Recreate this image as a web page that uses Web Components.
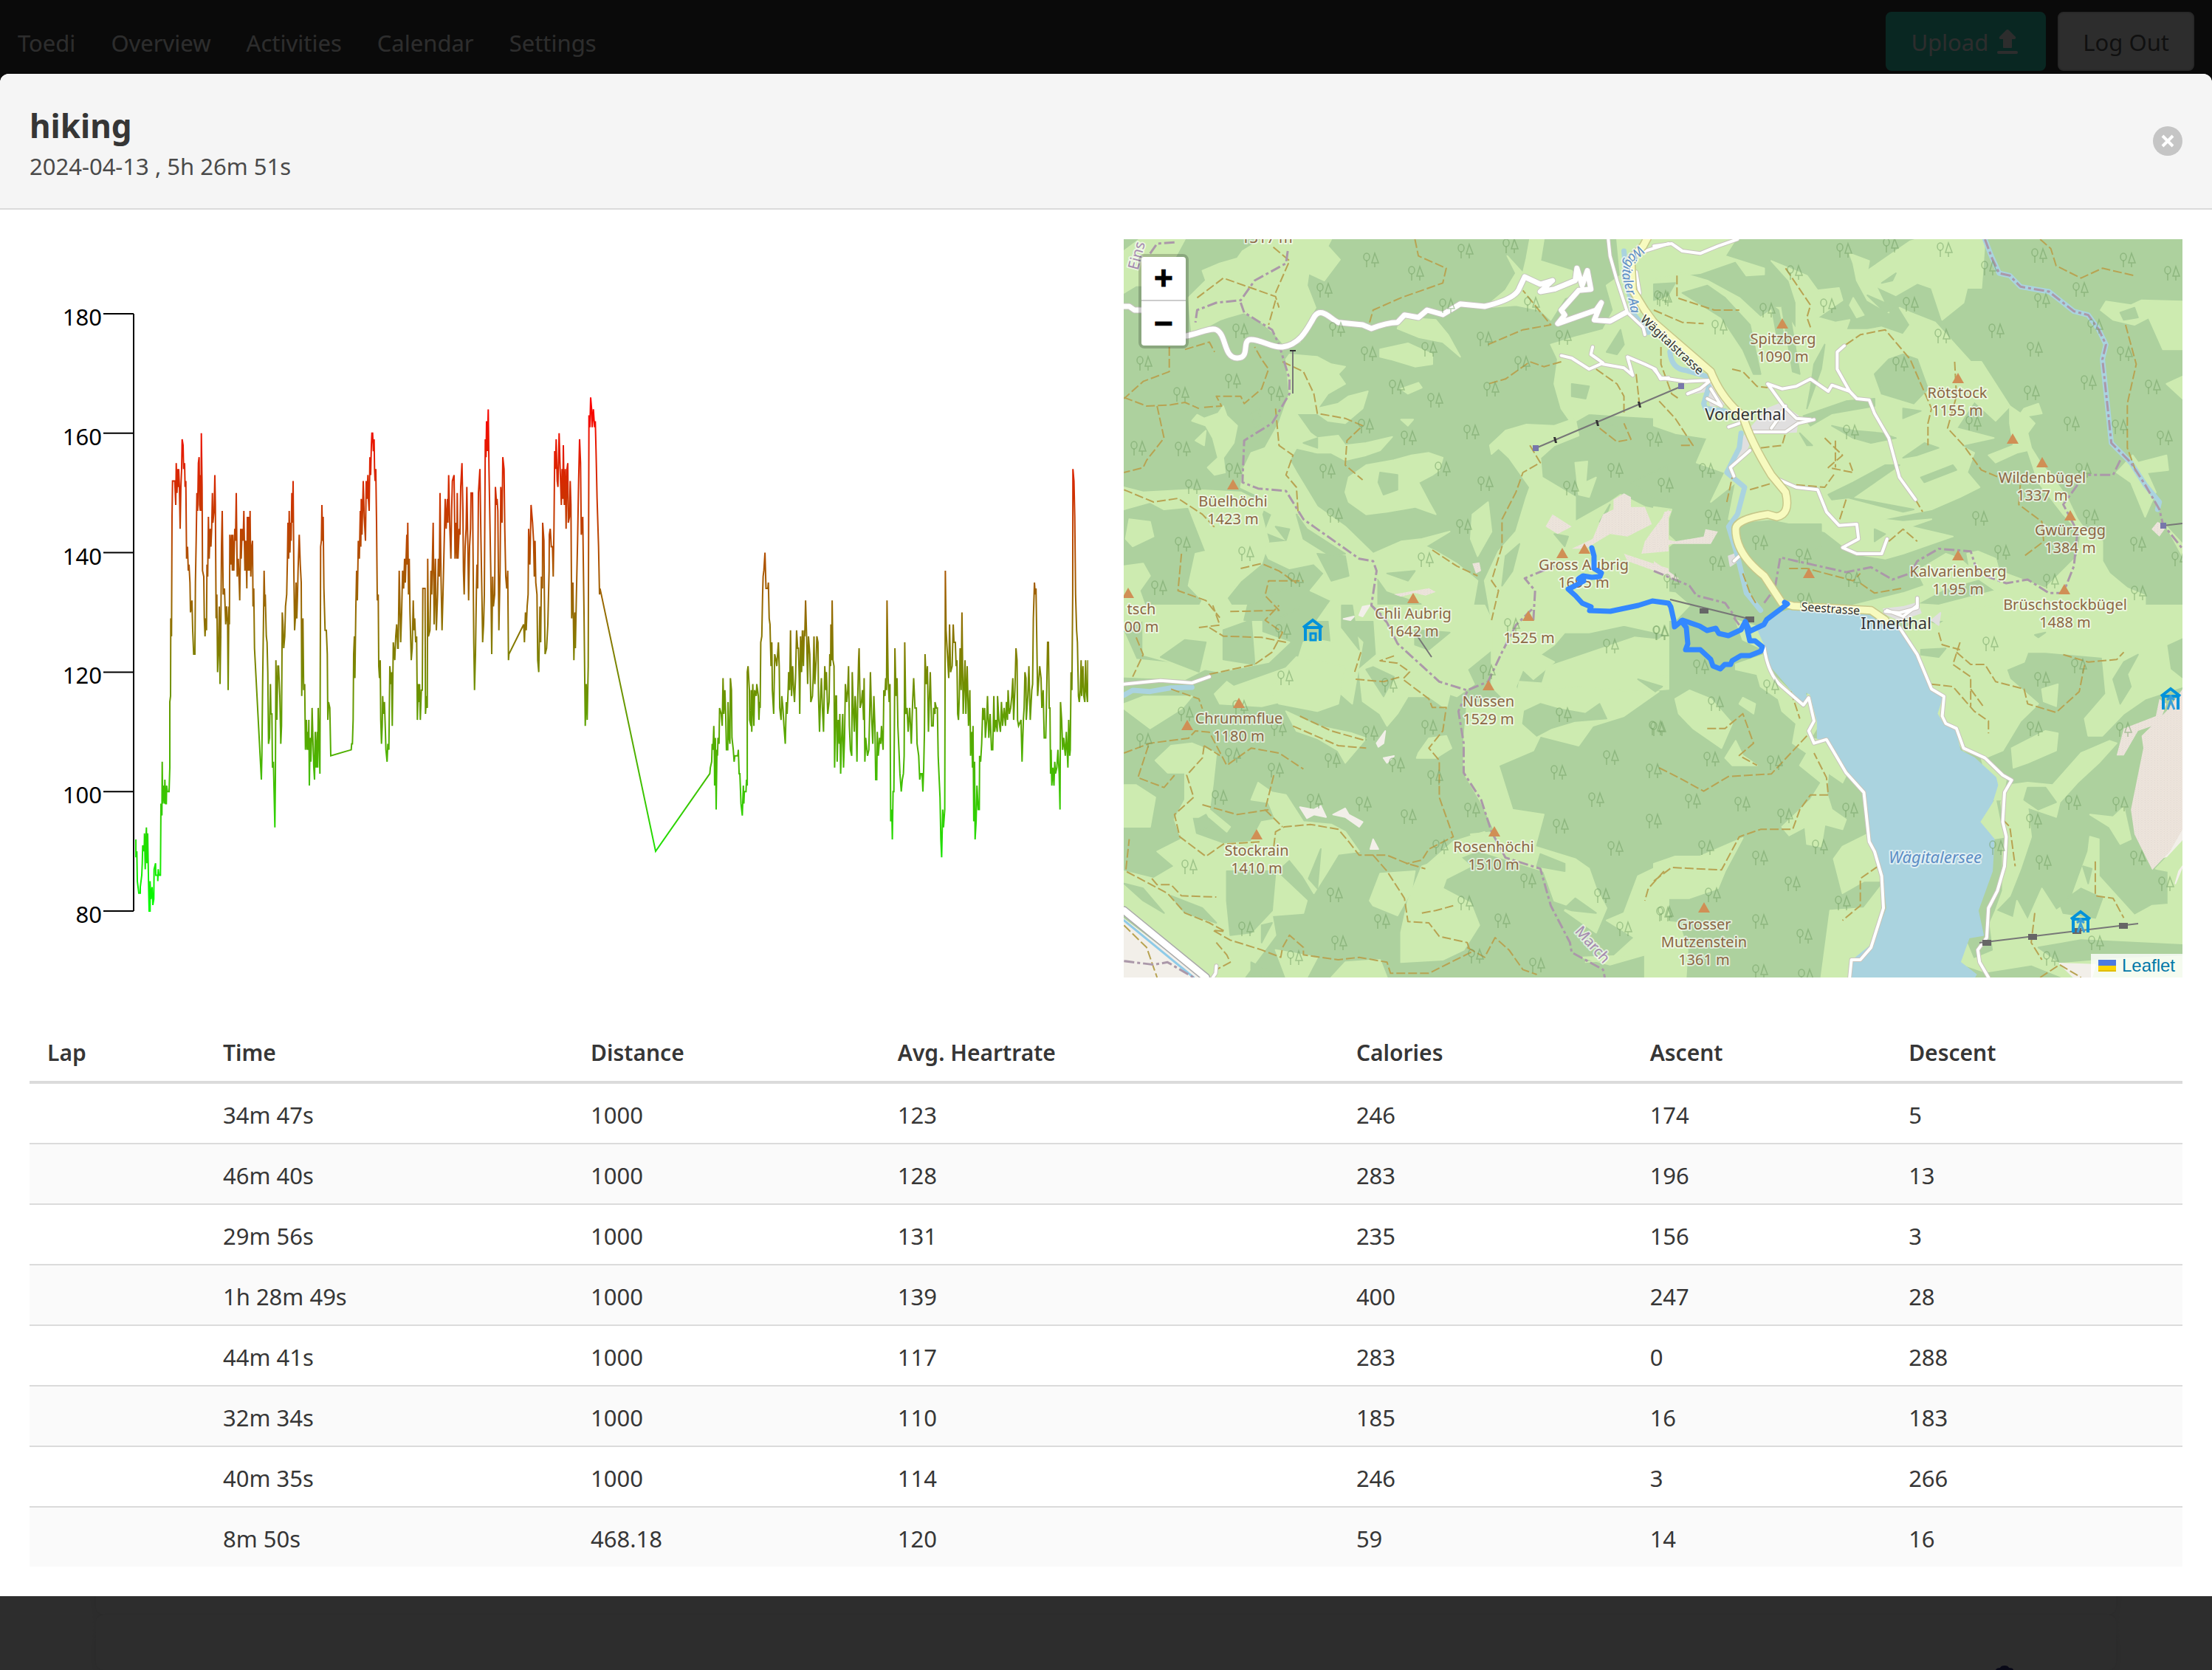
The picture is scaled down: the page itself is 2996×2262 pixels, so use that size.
<!DOCTYPE html>
<html lang="en">
<head>
<meta charset="utf-8">
<meta name="viewport" content="width=device-width, initial-scale=1">
<title>Toedi</title>
<style>
  html, body { margin: 0; }
  body { font: 31px/48px "Noto Sans", sans-serif; color: #363636; background: #fff; }
</style>
</head>
<body>
<toedi-app>
  <toedi-navbar slot="page"></toedi-navbar>
  <toedi-feed slot="page"></toedi-feed>
  <activity-modal slot="modal">
    <span slot="title">hiking</span>
    <span slot="subtitle">2024-04-13 , 5h 26m 51s</span>
    <heart-rate-chart slot="media"></heart-rate-chart>
    <route-map slot="media"></route-map>
    <lap-table slot="details"></lap-table>
  </activity-modal>
</toedi-app>

<script>
const define = (name, html, setup) => customElements.define(name, class extends HTMLElement {
  constructor() {
    super();
    this.attachShadow({ mode: 'open' }).innerHTML = html;
    if (setup) setup(this.shadowRoot);
  }
});

/* Application shell: the page and the modal share one grid cell */
define('toedi-app', `
<style>
  :host { display: grid; min-height: 100vh; }
  .page, .overlay { grid-area: 1 / 1; min-width: 0; }
  .page { display: flex; flex-direction: column; overflow: hidden; height: 100%; max-height: 100vh; }
  .overlay { position: relative; background: rgba(10,10,10,.86); padding: 100px 0; }
</style>
<div class="page"><slot name="page"></slot></div>
<div class="overlay"><slot name="modal"></slot></div>`);

define('toedi-navbar', `
<style>
  :host { display: block; background: #0a0a0a; }
  nav { display: flex; align-items: center; justify-content: space-between; min-height: 112px; padding-right: 24px; }
  .links, .buttons { display: flex; align-items: center; }
  .buttons { gap: 16px; }
  a { color: #fff; text-decoration: none; padding: 18px 24px 14px; }
  button { font: inherit; height: 80px; padding: 2px 32px 0; border: 2px solid #dbdbdb; border-radius: 8px; background: #fff; color: #363636; display: flex; align-items: center; }
  button.primary { background: #00d1b2; border-color: #00d1b2; color: #fff; gap: 8px; }
  svg { width: 36px; height: 36px; }
</style>
<nav aria-label="main navigation">
  <div class="links">
    <a href="#home">Toedi</a><a href="#overview">Overview</a><a href="#activities">Activities</a><a href="#calendar">Calendar</a><a href="#settings">Settings</a>
  </div>
  <div class="buttons">
    <button class="primary" type="button">Upload
      <svg viewBox="0 0 36 36" fill="currentColor" aria-hidden="true"><path d="M18 1q1 0 2 1l9 9q1 3-2 3h-3v11q0 1-1 1H13q-1 0-1-1V14H9q-3 0-2-3l9-9q1-1 2-1z"/><rect x="4" y="30" width="28" height="4" rx="2"/></svg>
    </button>
    <button type="button">Log Out</button>
  </div>
</nav>`);

define('toedi-feed', `
<style>
  :host { display: flex; flex-direction: column; flex: 1; padding: 0 130px; min-height: 0; }
  .card { background: #fff; border-radius: 12px; box-shadow: 0 16px 32px -4px rgba(10,10,10,.1), 0 0 0 2px rgba(10,10,10,.02); }
  .first { flex: 1; }
  .second { height: 75px; display: flex; align-items: flex-end; justify-content: flex-end; }
  svg { width: 40px; height: 6px; margin-right: 130px; }
</style>
<div class="card first"></div>
<div class="card second"><svg viewBox="0 0 40 6" aria-hidden="true"><path d="M7 6q1-3 6-3 1-3 6-3t6 3q6 0 6 3z" fill="#006"/></svg></div>`);

define('activity-modal', `
<style>
  :host { display: block; }
  section { border-radius: 12px 12px 0 0; overflow: hidden; background: #fff; }
  header { display: flex; align-items: center; justify-content: space-between; background: #f5f5f5; border-bottom: 2px solid #dbdbdb; padding: 40px; height: 102px; }
  .heading { display: grid; padding-top: 8px; }
  h1 { margin: 0; font-size: 44px; line-height: 60px; font-weight: 700; color: #363636; }
  p { margin: 0; line-height: 50px; color: #4a4a4a; }
  button { width: 40px; height: 40px; padding: 0; border: 0; border-radius: 50%; background: #c5c5c5; display: grid; place-items: center; }
  button svg { width: 20px; height: 20px; }
  .body { padding: 40px; display: grid; gap: 60px; }
  .columns { display: grid; grid-template-columns: minmax(0, 1fr) minmax(0, 1fr); gap: 48px; }
</style>
<section role="dialog" aria-modal="true" aria-labelledby="t">
  <header>
    <div class="heading"><h1 id="t"><slot name="title"></slot></h1><p><slot name="subtitle"></slot></p></div>
    <button type="button" aria-label="close"><svg viewBox="0 0 20 20" stroke="#fff" stroke-width="4" aria-hidden="true"><path d="M3 3l14 14M17 3L3 17"/></svg></button>
  </header>
  <div class="body">
    <div class="columns"><slot name="media"></slot></div>
    <slot name="details"></slot>
  </div>
</section>`);

/* Laps */
define('lap-table', `
<style>
  :host { display: block; }
  table { width: 100%; border-collapse: separate; border-spacing: 0; table-layout: fixed; }
  th, td { text-align: left; padding: 18px 24px 14px; border-bottom: 2px solid #dbdbdb; }
  th { font-size: 30px; font-weight: 600; border-bottom-width: 4px; }
  tbody tr:nth-child(even) { background: #fafafa; }
  tbody tr:last-child td { border-bottom: 0; }
</style>
<table><colgroup></colgroup><thead><tr></tr></thead><tbody></tbody></table>`, root => {
  const heads = [['Lap', 8.16], ['Time', 17.08], ['Distance', 14.26], ['Avg. Heartrate', 21.3], ['Calories', 13.64], ['Ascent', 12.02], ['Descent', 13.54]];
  const laps = [
    ['34m 47s', '1000', 123, 246, 174, 5],
    ['46m 40s', '1000', 128, 283, 196, 13],
    ['29m 56s', '1000', 131, 235, 156, 3],
    ['1h 28m 49s', '1000', 139, 400, 247, 28],
    ['44m 41s', '1000', 117, 283, 0, 288],
    ['32m 34s', '1000', 110, 185, 16, 183],
    ['40m 35s', '1000', 114, 246, 3, 266],
    ['8m 50s', '468.18', 120, 59, 14, 16]
  ];
  root.querySelector('colgroup').innerHTML = heads.map(h => `<col style="width:${h[1]}%">`).join('');
  root.querySelector('thead tr').innerHTML = heads.map(h => `<th scope="col">${h[0]}</th>`).join('');
  root.querySelector('tbody').innerHTML = laps.map(r => `<tr><td></td>${r.map(c => `<td>${c}</td>`).join('')}</tr>`).join('');
});

/* Heart rate: three stretches of samples, each with its own origin and scale */
const stretches = [
  { ox: 20, oy: 76, kx: 3, ky: 1.823, pts: `372,1343 372,1388 376,1373 378,1446 384,1477 390,1477 390,1462 396,1430 398,1402 400,1358 406,1373 407,1329 410,1417 412,1358 415,1314 417,1402 420,1329 422,1402 424,1462 426,1520 430,1520 430,1446 433,1490 436,1477 438,1462 441,1507 445,1490 446,1417 452,1402 453,1432 461,1432 461,1447 463,1417 466,1432 472,1432 474,1255 478,1285 479,1152 481,1255 484,1212 488,1255 490,1196 493,1255 496,1255 497,1212 500,1226 507,1226 510,1166 510,1005 513,990 514,798 517,842 519,548 521,460 530,460 534,518 536,414 539,488 543,430 545,474 546,430 549,474 552,577 555,474 558,430 560,355 564,370 566,430 570,414 572,474 575,460 578,650 582,620 585,680 588,665 592,710 594,783 600,753 603,828 607,887 612,887 614,710 617,606 620,490 623,533 626,414 629,399 631,518 634,533 635,445 637,533 638,341 641,474 643,680 648,695 650,798 653,842 656,798 659,828 661,665 664,695 667,548 670,650 674,577 677,621 680,577 683,490 685,562 690,533 693,445 695,518 698,798 701,740 704,931 708,870 711,768 714,960 717,842 720,621 723,533 727,738 732,724 737,812 741,768 745,812 747,975 750,768 752,812 754,592 758,665 761,592 764,680 766,592 770,680 774,577 777,606 780,490 784,695 788,650 792,710 794,753 798,577 800,650 804,577 808,606 811,533 815,680 819,606 823,724 825,548 829,680 831,548 834,680 836,533 839,695 843,620 846,606 848,768 851,724 854,870 882,1196 884,1138 887,960 890,828 893,680 896,768 898,739 902,842 905,857 908,931 911,1108 915,1094 919,960 921,1034 925,1034 927,1166 931,1152 937,1314 939,1196 941,902 945,1048 949,916 952,916 957,990 961,1108 964,1064 967,783 970,812 973,870 977,842 980,768 985,740 988,650 990,563 993,650 995,533 998,635 1001,562 1003,606 1006,490 1008,562 1011,460 1014,680 1017,828 1020,798 1023,710 1026,798 1029,740 1031,680 1036,592 1040,665 1044,710 1046,990 1051,798 1054,975 1058,960 1061,1122 1065,1048 1068,1122 1070,1078 1073,1122 1075,1048 1077,1211 1080,1094 1083,1152 1086,1094 1088,1019 1092,1108 1095,1166 1098,1196 1101,1078 1105,1166 1109,1078 1111,1166 1113,1019 1117,1108 1120,1181 1123,620 1126,606 1128,518 1131,606 1133,548 1136,724 1141,828 1146,828 1150,887 1152,1048 1155,1005 1160,1019 1164,1137 1247,1122 1249,1108 1252,1108 1255,1048 1257,887 1260,842 1262,946 1266,768 1269,680 1272,753 1276,606 1280,650 1284,533 1286,620 1288,504 1291,592 1296,460 1300,548 1305,606 1308,460 1311,504 1315,445 1317,503 1320,533 1323,400 1326,445 1329,370 1331,341 1334,341 1337,385 1340,355 1342,430 1344,460 1347,430 1350,562 1353,753 1357,740 1359,916 1362,945 1365,902 1367,1050 1370,1108 1373,1064 1375,990 1378,1034 1382,1005 1386,1078 1388,1122 1393,1152 1396,1108 1400,1122 1404,916 1409,960 1411,931 1414,1064 1418,857 1424,902 1428,842 1432,812 1436,872` },
  { ox: 460, oy: 176, kx: 3, ky: 2.063, pts: `118,780 122,563 128,764 132,680 136,563 140,613 144,530 147,596 150,530 153,463 155,546 157,430 160,630 163,530 166,680 171,814 175,780 179,646 182,730 185,697 189,764 193,748 196,980 200,880 203,930 205,880 208,980 212,897 216,897 218,613 227,613 229,964 233,913 236,947 238,530 241,748 247,730 251,563 254,630 260,430 264,713 269,530 273,730 278,630 281,530 285,580 288,346 292,580 296,730 300,630 304,513 309,363 313,446 318,363 320,430 323,296 328,446 332,530 335,396 338,312 345,296 347,413 349,530 353,430 356,530 358,346 361,530 366,446 369,463 372,330 377,263 381,396 383,563 386,630 390,497 394,446 397,330 401,497 404,646 408,497 412,446 414,346 420,346 422,513 425,763 428,897 432,797 436,613 438,546 441,613 444,346 450,280 454,463 458,630 461,763 465,713 468,630 472,196 475,246 477,146 480,230 484,112 487,280 490,396 494,563 498,797 502,580 505,663 510,630 513,330 518,380 520,363 523,396 527,730 532,563 535,330 540,430 543,246 548,280 551,446 555,580 559,613 563,563 566,814 568,797 628,714 631,763 635,680 638,730 642,664 646,630 648,446 653,546 658,380 664,430 668,480 671,580 674,480 677,596 682,630 685,814 689,847 694,664 697,763 700,580 704,613 705,430 710,480 712,630 715,797 721,780 726,714 731,563 732,463 736,446 740,497 745,497 748,580 751,446 754,230 757,280 760,196 764,313 767,330 772,178 776,280 781,380 784,280 787,363 789,212 793,380 797,280 800,446 804,280 807,263 809,430 814,413 817,312 820,380 823,697 828,596 832,814 836,680 838,780 842,630 847,480 851,312 855,196 859,263 862,463 868,413 870,530 873,680 878,998 882,880 886,980 890,830 893,130 897,163 900,78 904,112 906,162 911,112 916,162 919,146 922,230 926,363 929,430 932,497 936,630 938,613 1164,1348` },
  { ox: 900, oy: 376, kx: 2.8, ky: 3, pts: `60,1043 62,1018 67,994 69,921 72,946 75,849 77,946 78,1091 81,897 84,1191 87,946 89,970 91,897 95,921 97,776 103,800 107,849 110,655 113,800 117,704 120,800 123,946 128,946 129,752 133,897 136,921 138,655 142,704 144,897 149,946 152,997 155,970 166,970 168,946 171,1043 174,1043 178,1164 183,1215 187,1091 189,1164 191,1116 197,1116 199,1068 202,1091 202,630 205,606 210,704 211,825 216,849 217,704 219,873 223,680 227,849 230,704 236,728 238,680 241,704 244,728 246,825 249,752 251,776 253,510 257,485 260,315 262,243 265,218 269,145 271,218 273,291 280,291 282,267 285,413 288,437 292,606 295,510 297,704 302,800 306,558 311,582 314,606 317,558 320,510 323,606 325,776 330,825 333,728 337,776 341,849 346,922 350,752 353,800 357,704 359,630 363,704 366,461 370,728 374,606 378,704 381,752 385,655 389,461 393,534 396,534 399,655 401,800 404,485 408,630 411,461 415,606 418,461 420,485 423,340 427,485 431,680 434,485 439,558 443,752 449,728 452,655 455,485 458,680 463,582 466,485 470,510 472,728 476,873 480,728 483,655 487,776 491,873 496,606 500,704 502,630 507,800 512,752 515,558 518,606 519,437 522,582 524,340 527,582 531,606 533,1020 538,728 540,728 543,997 547,825 551,922 553,800 556,1043 560,897 564,800 567,1020 571,897 574,680 579,752 583,704 586,606 589,849 593,946 598,970 600,630 604,776 608,873 611,728 614,776 618,997 621,728 624,582 626,534 630,776 635,752 639,704 643,825 645,655 648,997 651,897 658,970 663,946 666,800 669,630 673,800 678,922 682,728 686,849 689,1068 693,1068 695,873 699,970 704,897 708,922 711,849 717,946 720,704 724,728 727,655 730,704 732,340 736,655 740,752 743,680 746,1240 750,1190 752,1312 755,1116 758,1116 760,849 762,534 766,728 770,655 773,849 778,970 781,1043 786,1116 790,1068 794,1043 797,970 799,510 803,800 808,776 812,873 818,776 824,922 829,752 833,655 838,776 843,776 846,922 852,970 856,1068 860,1043 865,1043 868,1116 871,1018 874,873 876,558 881,680 885,606 889,873 893,728 896,630 901,849 907,849 909,776 914,800 914,752 919,776 923,776 926,970 930,1068 933,1140 936,1312 939,1386 943,1190 946,1264 951,1190 953,218 956,461 961,558 966,655 969,437 973,630 979,606 983,437 986,510 991,510 994,606 997,582 1000,800 1003,825 1006,728 1009,534 1013,704 1016,388 1021,800 1028,582 1031,800 1036,606 1041,849 1046,704 1049,970 1054,873 1056,1020 1058,849 1061,1240 1064,997 1066,1312 1070,1240 1073,1091 1078,1190 1082,1190 1083,970 1087,997 1091,922 1095,776 1099,825 1102,776 1105,897 1110,825 1113,728 1118,897 1123,800 1128,946 1133,946 1137,728 1140,873 1145,825 1150,873 1151,728 1156,825 1162,873 1166,752 1170,849 1176,776 1181,849 1185,752 1189,825 1191,704 1196,800 1201,776 1205,728 1209,655 1212,825 1217,704 1221,534 1225,582 1227,825 1231,849 1240,825 1244,997 1249,825 1252,776 1255,630 1259,655 1260,825 1266,728 1270,606 1275,825 1281,704 1284,680 1287,413 1291,267 1294,315 1297,291 1300,510 1303,728 1308,655 1311,606 1316,655 1319,776 1324,704 1328,897 1334,897 1336,800 1341,510 1344,510 1347,776 1350,776 1352,1043 1354,946 1357,1091 1361,1018 1365,1091 1368,997 1371,1043 1376,1018 1380,946 1385,1043 1388,1190 1390,752 1394,825 1398,946 1402,897 1408,970 1412,873 1418,1020 1421,825 1425,970 1427,946 1430,630 1433,704 1436,315 1437,-195 1441,-146 1444,0 1447,315 1451,461 1454,510 1458,728 1461,752 1465,704 1468,582 1470,728 1475,606 1478,728 1482,752 1485,582 1488,704 1492,752 1494,582` }
];

define('heart-rate-chart', `
<style>
  :host { display: block; }
  svg { display: block; width: 100%; height: auto; }
  text { font-size: 31px; fill: #000; text-anchor: end; }
</style>
<svg viewBox="0 0 1434 1000" role="img" aria-label="Heart rate">
  <defs><linearGradient id="bpm" gradientUnits="userSpaceOnUse" x1="0" y1="214" x2="0" y2="910"><stop stop-color="#f00"/><stop offset="1" stop-color="#0f0"/></linearGradient></defs>
  <g class="axis" stroke="#000" stroke-width="2" fill="none"></g><g class="labels"></g>
  <polyline fill="none" stroke="url(#bpm)" stroke-width="2"/>
</svg>`, root => {
  const top = 101, bottom = 910, y = v => bottom - (v - 80) * (bottom - top) / 100;
  const ticks = [80, 100, 120, 140, 160, 180];
  root.querySelector('.axis').innerHTML = `<path d="M141 ${top}V${bottom}${ticks.map(t => `M100 ${y(t)}H141`).join('')}"/>`;
  root.querySelector('.labels').innerHTML = ticks.map(t => `<text x="98" y="${y(t) + 16}">${t}</text>`).join('');
  root.querySelector('polyline').setAttribute('points', stretches.flatMap(s => s.pts.split(' ').map(p => {
    const [px, py] = p.split(',').map(Number);
    const bpm = Math.round(80 + (bottom - (s.oy + py / s.ky)) / 8.09);
    return (s.ox + px / s.kx).toFixed(1) + ',' + y(bpm).toFixed(1);
  })).join(' '));
});

/* Map: four survey sheets (NW, NE, SW, SE) placed on one canvas */
const sheets = [
  { x: -2, y: -4, kx: .4719, ky: 1 / 3,
    grass: ['5,60 50,12 180,12 150,90 110,200 40,200 5,230','345,60 400,12 600,12 590,40 625,95 580,180 535,150 530,200 555,290 530,350 510,430 470,450 440,400 400,350 350,310 300,330 280,340 200,400 190,250 240,180 230,140 280,110 330,90','480,480 560,490 600,520 640,530 620,560 640,600 590,640 560,700 620,680 650,650 705,630 690,700 640,760 590,750 560,720 500,720 540,800 560,820 620,810 640,850 700,840 775,815 740,870 700,890 640,910 600,880 560,880 500,860 480,910 500,960 560,1100 640,1180 720,1290 800,1240 860,1230 940,1200 870,1260 900,1280 960,1330 1020,1400 1000,1560 880,1560 860,1490 760,1440 730,1380 730,1560 560,1560 600,1480 540,1440 580,1370 550,1330 480,1350 420,1310 400,1250 480,1240 410,1200 430,1130 380,1090 400,1060 340,1020 350,940 370,880 410,860 450,760 480,640 470,500','200,750 215,725 235,740 275,720 290,690 300,730 330,770 320,840 290,900 295,960 265,970 245,940 275,900 260,820 240,770','210,830 240,790 235,850','5,1020 60,1040 200,1030 340,1040 410,1090 400,1130 420,1240 400,1330 340,1400 300,1470 340,1560 200,1560 230,1480 190,1420 210,1290 240,1280 190,1100 120,1110 80,1080 5,1110','20,1150 80,1160 90,1220 30,1260 10,1230','5,1340 60,1330 80,1380 50,1440 80,1560 5,1560','740,460 820,435 890,480 890,520 840,530 770,500 740,490','800,620 850,595 860,615 820,640','800,330 900,340 935,400 970,490 920,430 850,410 790,375','640,1040 650,980 700,930 780,910 830,890 880,880 920,900 910,950 890,970 850,1000 880,1080 900,1130 840,1100 760,1120 700,1130 650,1080','1105,80 1150,150 1160,90 1170,12 1210,12 1200,100 1290,140 1330,220 1270,250 1230,340 1200,300 1130,280 1040,290 1100,220 1130,150','1420,12 1568,12 1568,740 1440,730 1340,720 1290,760 1260,700 1240,600 1250,500 1230,440 1300,410 1380,380 1410,300 1390,200 1430,160','1055,850 1100,790 1160,765 1240,770 1300,740 1310,810 1240,850 1200,900 1205,980 1300,1060 1300,1160 1400,1080 1430,1050 1500,1100 1568,1120 1568,1560 1060,1560 1040,1400 1080,1280 1130,1200 1160,1060 1170,1020 1110,900 1080,860 1060,885','1300,920 1335,915 1330,1000 1360,980 1340,1060 1310,1050','1005,1130 1050,1080 1060,1200 1020,1300 1000,1230','800,745 835,745 820,770'],
    woods: ['740,960 790,970 790,1030 750,1050 735,1000','440,1180 480,1190 470,1235','500,1130 530,1190 640,1290 600,1300 520,1230','560,1290 640,1300 650,1380 600,1400','1400,1090 1390,1130 1370,1160','1290,600 1340,610 1330,660 1290,650','1350,750 1420,770 1400,800 1350,790','1440,440 1420,480 1390,470 1430,380','1460,1000 1568,930 1568,1080 1520,1060','370,720 390,700 400,760 380,780','560,820 520,840 560,860','1100,1300 1140,1250 1120,1360 1090,1420','1240,1210 1280,1220 1270,1260','760,1370 840,1360 820,1400','360,1500 470,1430 520,1500 440,1560 350,1560'],
    rock: ['1290,1270 1350,1230 1380,1130 1410,1110 1410,1070 1440,1045 1460,1060 1460,1100 1500,1100 1520,1170 1450,1220 1400,1210 1330,1270','1215,1180 1235,1130 1290,1180 1250,1210','1490,1290 1500,1240 1520,1200 1568,1110 1568,1280','1440,1290 1568,1350 1568,1380 1450,1320','780,1455 840,1440 880,1430 900,1445 870,1460 840,1450 800,1465','1005,1330 1025,1325 1030,1360 1015,1370'],
    white: ['M185,405 C230,390 255,370 270,380 C300,400 290,495 330,495 C370,495 340,420 370,420 C400,420 430,455 460,450 C510,440 530,380 550,330 C570,280 600,340 620,350 L690,360 715,375 Q760,350 790,350 L810,320 850,330 875,300 920,318 970,275 1040,285 Q1130,255 1140,210 L1155,165 1200,195 1235,180 1200,225 1240,215 1300,180 1305,130 1320,200 1335,140 1345,215 1310,220 1260,300 1270,320 1250,355 1360,300 1375,270 1355,340 1400,345 1445,310','M0,285 20,285 35,300 60,300'],
    lane: ['M1395,12 1400,80 1420,180 1450,310 1495,370 1500,400','M1260,485 1290,495 1340,540 1380,515 1345,480 1350,450','M1380,520 1440,535 1465,565 1450,490 1500,520 1530,540 1545,580 1568,575','M1475,145 1485,230 1475,290','M1490,65 1568,30'],
    path: ['M215,250 290,170 330,190 440,245 450,290','M440,260 420,360','M440,230 480,100 430,40','M135,450 135,550 60,590 5,660','M5,655 70,690 140,685 180,675 220,700','M235,695 285,690 270,650 340,650 350,680 400,620 420,540 400,500 380,450','M460,510 520,550 550,640 560,720 640,740 690,770 645,830 640,930 690,990','M100,690 120,820 70,910 60,940 5,960','M440,700 450,850 490,890 470,970 500,1020 505,1130','M840,12 850,80 930,130 920,190 800,250 720,300 710,350','M1260,510 1210,530 1170,510 1100,580 1050,600','M1170,850 1200,920 1150,960 1130,1040 1090,1150 1090,1260 1060,1400 1080,1440 1060,1560','M5,1030 90,1080 160,1065 230,1130 270,1190','M170,1290 160,1440 240,1480 280,1550','M310,1525 450,1520 410,1460 420,1400 520,1400','M340,1350 400,1330 450,1360 500,1410','M1360,540 1420,600 1440,650 1440,720','M1475,560 1485,690','M1050,440 1150,380 1230,360 1150,220','M180,460 250,430 265,470','M1370,780 1420,835 1460,825 1440,760','M890,1275 960,1340 1020,1380'],
    border: ['M475,60 470,110 380,180 340,260 270,270 215,300 210,350','M340,270 350,310 430,380 450,440 480,580 480,640 430,760 350,830 345,1000 390,1025 470,1035 520,1150 680,1310 720,1320 730,1360 715,1500 760,1560','M80,70 100,30 150,25','M1180,1560 1185,1440 1155,1390 1240,1340'],
    tree: '715,95 985,60 843,150 580,218 1115,40 339,383 318,587 170,643 441,640 788,612 898,665 1060,620 700,770 822,820 1003,795 707,478 63,516 174,865 47,860 203,1018 321,950 174,1250 106,1428 590,955 920,945 1042,1005 1415,950 1288,1022 1148,515 1177,275 1267,410 1527,825 982,1180 1040,417 617,378 356,1290 610,1135 872,1315 497,1395 932,283 882,460 1550,250' },
  { x: 718, y: -4, kx: .4822, ky: 1 / 3,
    grass: ['0,12 230,12 200,80 310,130 310,155 260,160 230,100 130,150 0,170','0,180 80,150 150,180 240,250 300,330 340,290 360,290 400,380 400,270 380,180 330,100 430,160 460,220 520,210 530,260 460,330 510,350 550,340 540,380 600,380 640,370 700,400 720,360 690,290 720,310 790,350 890,510 920,510 1000,690 960,750 900,670 850,780 955,820 860,850 900,880 880,960 915,1020 860,1060 780,1110 640,1150 700,1160 780,1150 720,1180 840,1220 700,1290 650,1310 560,1290 480,1200 400,1170 330,1150 250,1160 210,1150 230,1000 160,1080 200,960 120,920 150,820 60,800 0,770','600,140 720,20 740,12 930,12 920,210 880,210 870,270 810,340 780,210 740,190 680,240 620,200','550,70 605,100 600,140 630,220 660,310 600,260 570,180 560,110','560,250 590,320 570,330 550,280','1255,300 1270,265 1340,280 1370,260 1485,265 1485,460 1430,460 1390,330 1350,360 1290,340','1040,700 1080,680 1090,720 1050,730 1070,760 1050,800 1060,860 1090,930 1110,960 1160,1060 1190,1150 1230,1230 1260,1240 1260,1320 1280,1370 1330,1430 1380,1460 1380,1560 640,1560 700,1490 800,1500 960,1440 890,1370 880,1290 910,1280 960,1310 970,1360 1100,1430 1190,1300 1200,1210 1150,1130 1080,1000 1050,870 1020,880 960,920 940,890 1010,850 1000,760 1000,690 1030,720','1300,960 1345,890 1360,920 1440,890 1445,950 1385,960 1410,1040 1380,1140 1340,1000','820,1290 860,1310 920,1390 820,1430 730,1500 640,1530 560,1500 700,1450 760,1420 740,1360','1440,600 1485,570 1485,660','0,1100 50,1110 30,1200 60,1240 0,1310','1440,1180 1485,1250 1485,1300','0,1440 60,1450 100,1500 60,1560 0,1560'],
    woods: ['620,560 660,500 700,480 740,500 770,620 730,680 640,640','420,730 540,670 620,660 620,690 500,720 440,770','490,1050 560,1000 650,930 690,930 560,1060 500,1070','750,980 840,930 850,950 760,1000','150,200 200,250 270,360 300,560 280,560 250,460 190,330 80,230','360,290 380,300 410,560 390,550','330,280 350,300 370,440 350,440','0,195 60,190 40,240 0,260','500,770 560,790 640,800 680,820 610,840 560,820','700,900 760,840 800,860 740,890','430,700 440,620 450,520 480,440 470,540','700,700 750,710 700,740','410,800 445,850 430,850','600,240 680,290 650,310','640,190 680,150 670,180','1310,310 1350,290 1360,330 1320,340','250,1170 470,1170 470,1260 300,1400 250,1280','540,1060 620,1080 730,1110 700,1120','620,1190 650,1210 620,1240'],
    rock: ['0,1220 60,1240 140,1220 145,1190 180,1200 160,1250 50,1250 0,1275','0,1240 30,1120 50,1115 20,1210','0,1320 70,1390 60,1400 0,1350','1398,1190 1415,1160 1440,1180 1420,1220'],
    town: ['265,790 320,700 355,680 405,730 400,795 280,800 260,870 215,950 250,820','100,640 160,590 200,680 160,690 150,630','645,1530 740,1490 750,1530 690,1560','210,1300 230,1290 235,1320 215,1340'],
    water: ['M45,470 Q50,540 90,545 L150,570','M155,610 140,680 145,700 200,710','M245,800 240,860 205,960 255,1020 235,1130 210,1180 235,1300 260,1450 300,1520','M930,12 945,70 970,150 1000,160 1030,205 1110,225 1180,305 1220,320 1250,380 1270,440 1260,500 1275,700 1285,840 1340,920 1380,1010 1420,1080 1415,1110'],
    lane: ['M0,40 50,30 80,60 130,70 180,40 235,12','M0,540 20,575 90,590 160,585 130,620 95,640','M150,660 190,690 160,620','M320,600 365,690 400,740 440,745','M210,775 240,760 M370,690 350,740 330,780','M320,600 360,620 400,610 440,580 490,630 500,605 550,630 515,540 515,470 535,445','M550,630 570,660 605,665 620,720 660,820 690,980 735,1070','M345,985 400,1020 460,1030 485,1120 520,1175 570,1170 575,1230 530,1265 570,1290 640,1290 655,1230','M270,870 215,940 225,975','M280,795 370,795 405,760 450,745','M240,1300 225,1320','M740,1470 740,1510 690,1530 650,1525'],
    path: ['M540,440 580,400 650,380 720,500 750,600 780,700 770,760 770,850','M845,510 850,650 825,780 870,850 920,950 970,980 1030,1000 1025,1090 1090,1160 1095,1240 1040,1300','M1085,12 1115,50 1130,120 1200,170 1260,130 1350,160','M370,130 440,280 430,330 440,370','M65,160 65,250 170,300 240,300','M0,300 80,350 140,355','M15,670 60,740 110,850 75,850','M220,540 250,550 290,610 320,615','M300,860 360,850 370,800','M480,820 530,890 490,940 560,960 550,920','M270,1030 340,1000 M510,830 510,940','M380,1350 430,1350 560,1400 580,1370','M1325,360 1355,520 1330,680 1330,860 1355,960','M735,1070 755,1120','M400,1010 480,1020 510,960','M540,1070 520,1160','M205,1080 220,980','M580,1410 620,1450 700,1430','M250,1370 270,1450 290,1500','M660,1240 700,1190 740,1240','M20,450 20,520 50,640 70,660'],
    border: ['M930,12 950,90 970,150 1000,160 1030,205 1110,225 1180,305 1220,320 1250,380 1270,440 1260,500 1275,700 1285,840 1340,920 1380,1010 1420,1110 1430,1170 1485,1270','M1310,910 1290,970 1220,970','M1190,1010 1150,1090 1190,1200 1180,1340 1150,1450 1110,1450 1050,1395 990,1410 910,1370 890,1280 800,1270 740,1320 720,1370 670,1395 610,1345 540,1365 355,1305 340,1430 310,1490','M0,1360 100,1420 120,1460 200,1490 230,1550'],
    tree: '535,58 665,35 817,53 1082,78 1331,95 1456,150 942,130 1198,215 1090,262 962,383 1070,460 1323,478 1222,593 1402,612 1062,635 1173,762 1308,775 1435,820 899,758 721,275 490,282 396,148 184,370 320,300 150,950 33,1012 166,1140 298,1245 178,1330 422,1300 916,1145 1227,1140 1360,1250 978,1285 1115,1400 1363,1450 1208,950 692,520 810,405 553,795 50,1400 426,1480 560,1395 28,255 1477,1310 1240,365' },
  { x: -2, y: 496, kx: .4719, ky: 1 / 3,
    grass: ['5,0 90,0 60,60 5,100','60,0 430,0 400,60 400,110 480,150 420,230 280,270 200,250 110,220 60,200','5,290 5,110 40,220 250,250 180,300','320,330 500,240 520,150 560,140 600,150 590,0 620,0 640,80 690,150 670,320 660,400 620,350 560,400 460,390 400,410 280,400 265,360 300,310','500,210 580,230 640,250 620,400 560,430 450,400 420,350 460,270','730,200 720,0 1040,0 1060,60 1100,90 1060,180 990,260 1010,320 960,370 940,360 930,420 880,370 820,370 790,440 760,490 740,440 690,390 680,260','1060,0 1568,0 1568,120 1440,80 1340,110 1270,110 1240,160 1200,200 1240,230 1180,300 1150,260 1130,330 1140,380 1110,400 1060,330','990,400 1130,380 1140,310 1540,350 1440,450 1350,490 1310,570 1200,530 1180,590 1080,650 1120,830 1210,850 1185,980 1300,1030 1340,1070 1360,1150 1390,1230 1360,1330 1270,1240 1280,1220 1240,1200 1210,1080 1030,1000 1000,930 1070,920 1030,800 980,680 980,560','1470,130 1540,140 1568,110 1568,340 1480,350 1300,330 1200,340 1220,250','850,600 880,540 930,530 945,580 900,620 845,620','5,730 40,730 95,780 80,900 5,900','95,630 140,570 200,560 270,600 260,730 250,830 310,900 300,920 250,860 200,860 210,930 290,970 370,960 400,880 440,870 420,800 370,790 390,720 430,760 470,770 520,880 600,890 640,920 680,1000 620,1010 590,1080 550,1170 520,1100 480,1030 440,1080 530,1200 520,1250 430,1260 440,1340 350,1512 245,1512 5,1240 5,1080 90,1110 150,1060 100,1000 170,950 150,870 180,790 180,680 130,680','710,1200 740,1090 840,1080 830,1160 790,1260 720,1220','860,1060 960,1010 1000,1060 930,1110 920,1150 1000,1210 1025,1300 980,1400 920,1440 800,1450 800,1330 820,1200','870,1060 950,960 1040,920 1050,980 960,1030','1568,1040 1480,1100 1440,1250 1390,1280 1470,1350 1400,1440 1330,1450 1500,1420 1500,1512 1568,1512','470,430 560,490 660,520 700,540 640,640 620,590 560,540 500,510','5,400 60,370 200,370 170,420 80,500 5,420','600,1512 640,1450 740,1440 760,1512','440,1400 560,1430 530,1512 470,1512','1320,1430 1500,1420 1400,1460'],
    woods: ['110,210 180,140 240,150 220,270','1155,430 1200,400 1250,420 1330,440 1370,400 1390,460 1300,470 1230,500 1190,530 1150,480','300,1080 440,1080 430,1240 370,1330 310,1340 300,1200','290,100 370,60 380,240 290,220','630,90 680,180 660,0 630,0','700,260 750,370 780,290 720,250','840,100 940,110 880,180 840,160','140,1180 230,1230 270,1290 180,1250','5,1130 60,1200 120,1250 60,1150','215,870 240,850 260,900 220,910','370,1450 430,1490 420,1512 370,1500','400,1300 430,1290 400,1370','535,1110 570,990 560,1150','1270,1230 1300,1190 1360,1250 1290,1240','1200,1010 1270,1050 1270,1080 1190,1060','1480,300 1550,330 1530,350'],
    pale: ['510,820 550,830 570,815 585,860 550,850 530,865','605,850 640,825 650,850 690,880 680,900 640,860','730,560 755,510 750,560 735,575','750,620 780,612 760,640','712,990 720,950 735,990','680,40 690,5 710,0 690,45','635,55 665,45 655,60','5,1275 225,1512 5,1512'],
    water: ['M5,365 30,345 80,350 140,335 200,333'],
    stream: ['M5,1280 205,1512'],
    motor: ['M5,1240 240,1512'],
    lane: ['M5,320 110,305 200,315 250,290','M270,1465 268,1495 260,1512'],
    path: ['M250,280 380,240 430,190 460,110 410,60 450,0','M250,90 290,125 400,130 470,150','M40,130 60,200 30,290','M220,90 280,80 260,0','M685,190 665,280','M780,205 740,225 790,235 825,270 805,300 880,380 890,415 930,415 920,510 880,580 910,630 910,780 950,940 880,990 860,1035 815,1050','M670,300 750,310 800,290','M5,600 80,560 190,540 210,510 250,515 300,650 330,620 370,580 450,600 520,665','M75,570 45,700 120,740 150,690','M235,570 280,610','M235,570 230,620 185,690 205,780 150,850 165,940 240,1020 290,970 400,960','M435,690 410,830 460,900','M435,980 440,920 465,900 540,890 620,910 650,960 680,1015 760,1015 820,1050 870,1070','M230,810 330,850 420,830','M720,1015 760,1080 810,1190 820,1285 880,1290 910,1345 990,1370 1000,1410 880,1495 770,1495 760,1450 680,1430 620,1440 520,1420 520,1390 480,1340 460,1390 455,1430 400,1400 310,1360 260,1320 295,1325 250,1290 180,1250 130,1170 10,1080 20,950','M85,1110 100,1135 140,1135 170,1180 270,1185','M270,1370 300,1420 310,1450 270,1480','M990,1390 1040,1430 1070,1350 1110,1400 1150,1480 1190,1500','M860,1250 900,1240 950,1220','M510,450 600,510 700,550','M490,490 620,570 700,580','M5,1300 70,1390 100,1512','M1555,1080 1510,1150 1500,1200','M140,340 220,380 230,420'],
    border: ['M715,0 760,70 790,155 910,310 990,345 1050,310 1090,190 1130,80 1180,10','M990,350 965,430 980,560 980,680 1030,790 1060,920 1100,1025 1200,1070 1230,1220 1285,1370 1290,1410 1380,1480 1385,1512','M5,1445 90,1460 130,1450 205,1512'],
    tree: '462,105 1402,165 1545,110 1050,270 183,440 338,415 449,500 317,610 441,670 605,630 788,647 898,698 553,795 694,808 822,857 1004,830 1253,677 1402,617 1534,497 1360,790 1525,672 1525,877 1258,898 1415,987 1165,1120 1377,1180 1092,1282 610,1175 746,1285 623,1370 356,1315 495,1430 1190,1462 1440,1315 63,548 280,780 914,980 192,1062 1555,1255 712,520 881,495 985,1210 468,295 768,325 1267,445 1015,1425 1118,80' },
  { x: 718, y: 496, kx: .4822, ky: 1 / 3,
    grass: ['230,240 310,200 320,260 420,400 440,340 470,470 440,540 480,550 540,690 530,720 490,680 485,760 500,830 540,870 530,910 480,890 470,980 430,970 425,900 380,935 360,900 440,790 470,720 410,650 430,600 390,560 400,480 360,430 350,380 300,330 290,280 230,260','505,1030 530,980 600,930 625,1060 660,1120 590,1120 530,1170','495,1240 590,1230 660,1100 640,1240 600,1400 565,1440 560,1512 470,1512','60,380 100,345 160,380 220,480 190,580 110,500 70,440','200,620 230,550 250,610 290,650 220,650','240,400 250,375 285,400 280,440','0,1050 60,1020 130,1020 250,945 200,1080 180,1150 100,1190 30,1190 0,1220','0,1280 70,1290 95,1400 90,1512 0,1512','0,280 40,290 30,330 0,320','690,110 740,60 800,80 860,20 960,0 1485,0 1485,130 1440,160 1450,260 1485,300 1485,330 1380,380 1320,440 1260,530 1220,530 1210,460 1270,360 1260,210 1100,190 1050,190 1040,230 990,260 1000,300 1080,400 1030,470 980,590 930,620 870,590 830,500 790,440 800,380 770,340','1005,580 1100,510 1135,520 1130,590 1050,640 1010,660','1000,730 1050,720 1120,730 1200,600 1280,550 1300,560 1250,640 1190,720 1140,800 1130,860 1050,820 1060,940 1030,1070 1000,1180 960,1240 980,1160 980,1000 990,940 975,800','905,880 960,790 975,900 990,940 945,950','920,620 990,700 980,790 950,790','1225,850 1290,860 1320,820 1340,950 1310,970 1280,900','945,1290 960,1240 1010,1270 1020,1200 1050,1280 1090,1150 1130,1240 1170,1200 1220,1000 1225,940 1250,950 1250,1100 1350,1260 1400,1220 1445,1215 1445,1080 1410,1070 1450,1010 1450,950 1485,960 1485,1512 1150,1512 1060,1460 930,1490 850,1450 880,1340 920,1340','1090,340 1135,320 1130,410 1095,390','230,60 300,90 310,180 250,140'],
    woods: ['1080,1390 1200,1360 1485,1380 1485,1420 1300,1430 1140,1450','1140,1210 1200,1150 1260,1190 1240,1270 1150,1250','1050,740 1100,740 1130,800 1080,830 1040,790','750,180 820,175 800,210 750,200','1320,230 1360,200 1330,280 1340,330 1310,400 1290,300','1070,120 1100,110 1080,130','880,1360 940,1290 950,1400 900,1430','1205,1060 1230,1070 1220,1130'],
    lake: ['330,40 380,20 600,40 650,60 690,100 740,200 775,340 810,370 795,440 815,490 845,500 860,590 900,620 960,700 965,730 950,800 915,880 955,950 950,1080 910,1240 925,1340 885,1350 860,1450 905,1500 900,1512 555,1512 560,1440 620,1370 655,1230 645,1100 605,960 595,760 540,680 480,545 460,540 460,470 440,360 425,350 430,390 420,400 325,240 315,170 290,90'],
    rock: ['1340,830 1375,580 1370,530 1440,430 1485,340 1485,910 1450,1000 1400,1075 1350,930','1300,610 1320,500 1410,450 1420,380 1440,400 1420,480 1360,510 1320,610'],
    pale: ['1345,820 1400,820 1390,860 1360,900','1415,1030 1410,940 1485,890 1485,950 1440,1020','1140,1455 1240,1460 1230,1512 1180,1512','1465,1130 1485,1060 1475,1080'],
    town: ['645,15 740,0 740,30 690,60','780,60 805,30 800,80'],
    lane: ['M310,170 Q320,280 360,330 L420,405 435,375 450,470 435,510 450,560 485,545 540,680 590,760 605,960 620,1000 640,1100 645,1230 610,1390 580,1440 555,1440 550,1512','M690,90 740,200 780,340 815,370 810,450 820,480 850,500 870,580 930,620 980,690 1005,710 985,760 980,880 990,940 985,1060 965,1160 940,1230 935,1350 910,1400 915,1450 940,1512','M655,20 700,45 740,0'],
    path: ['M15,660 70,700 140,755 210,695 330,685 430,530','M0,1120 50,1065 190,1075 240,940 300,910 390,910 410,830 440,770 490,770 485,700 450,600','M150,500 200,500 250,440 280,560 240,610 290,650','M780,320 840,330 900,430 940,470 940,520','M860,150 840,240 890,290 890,410','M850,190 890,240 930,240 960,310 1040,340 1050,400 1130,435 1195,350 1210,240','M1150,200 1220,230 1300,220 1320,190','M980,870 1000,900 1015,1060','M1240,1040 1240,1180 1290,1190 1320,1270','M1070,1250 1060,1370 1090,1440','M630,1060 580,1110 580,1220 530,1280','M385,350 410,460','M800,110 810,160 860,180','M890,340 925,410','M1085,1512 1140,1460 1200,1512'],
    border: ['M225,50 240,80'],
    tree: '20,110 133,250 330,330 12,500 162,625 110,795 248,808 551,830 298,1025 147,985 390,1130 33,1252 298,1285 423,1345 530,1210 165,1175 466,980 1090,300 1070,500 1195,245 1178,800 1310,807 1095,1045 1360,1025 1115,1435 1242,1370 298,1487 340,640 370,855 964,985 1320,505 428,1505 945,155 1440,1130 175,400 1068,875' }
];

const peaks = [
  [148,332,148,362,['Büelhöchi','1423 m']],[594,425],[624,419,623,448,['Gross Aubrig','1695 m']],
  [392,486,392,514,['Chli Aubrig','1642 m']],[548,510,549,547,['1525 m']],[494,604,494,633,['Nüssen','1529 m']],
  [86,658],[156,628,156,656,['Chrummflue','1180 m']],[180,806,180,835,['Stockrain','1410 m']],
  [502,802,501,830,['Rosenhöchi','1510 m']],[6,479,24,508,['tsch','00 m']],
  [892,114,893,142,['Spitzberg','1090 m']],[1130,188,1129,215,['Rötstock','1155 m']],[1204,270],
  [1244,302,1244,330,['Wildenbügel','1337 m']],[1282,374,1282,401,['Gwürzegg','1384 m']],
  [1130,428,1130,457,['Kalvarienberg','1195 m']],[928,452],[1274,474,1275,502,['Brüschstockbügel','1488 m']],
  [786,905,786,935,['Grosser','Mutzenstein','1361 m']]
];

define('route-map', `
<style>
  :host { display: grid; position: relative; overflow: hidden; font-size: 24px; line-height: 32px; }
  .canvas { display: block; width: 100%; height: auto; background: #add19e; }
  .canvas text { font-size: 20px; text-anchor: middle; paint-order: stroke; stroke: rgba(255,255,255,.6); stroke-width: 4px; stroke-linejoin: round; }
  .sheets path, .sheets polygon { vector-effect: non-scaling-stroke; }
  .peaks text { fill: #8c6644; }
  .zoom { position: absolute; left: 20px; top: 20px; border: 4px solid rgba(0,0,0,.2); border-radius: 8px; background-clip: padding-box; overflow: hidden; display: grid; }
  .zoom button { width: 60px; height: 60px; padding: 6px 0 0; border: 0; background: #fff; color: #000; font: bold 44px/50px "Liberation Mono", monospace; -webkit-text-stroke: 1px #000; }
  .zoom button:first-child { border-bottom: 2px solid #ccc; }
  .attribution { position: absolute; right: 0; bottom: 0; background: rgba(255,255,255,.8); padding: 0 10px; }
  .attribution a { font-family: "Liberation Sans", Arial, sans-serif; color: #0078a8; text-decoration: none; display: flex; align-items: center; gap: 8px; }
  .attribution svg { width: 24px; height: 16px; }
</style>
<svg class="canvas" viewBox="0 0 1434 1000" role="img" aria-label="Route map">
  <defs>
    <g id="tree" fill="none" stroke="#6f9d62" stroke-opacity=".5" stroke-width="1.5"><ellipse cx="-6" cy="-4" rx="4" ry="5"/><path d="M-6 1V10M5 -9L1 4H10ZM5 4V10"/></g>
    <pattern id="scree" width="9" height="9" patternUnits="userSpaceOnUse"><rect width="9" height="9" fill="#eee5dc"/><path d="M1 2h3M6 6h2M2 7l1 1" stroke="#d8d0cb" stroke-width="1.5"/></pattern>
    <g id="hut" fill="none" stroke="#0092da" stroke-width="3"><path d="M-13 -5L0 -15 13 -5M-10 -7V13M10 -7V13M-12 -5H12" stroke-width="4"/></g>
    <path id="stream" d="M699 8Q668 30 678 62T690 122"/>
  </defs>
  <g class="sheets"></g>
  <g class="trees"></g>
  <g fill="none" stroke="#777" stroke-width="2"><path d="M558 283L756 199M229 151V209M1159 953L1374 927M740 488L850 515M1408 388L1434 385M394 532L417 566"/></g>
  <g fill="#7777aa"><path d="M554 279h8v8h-8zM751 195h8v8h-8zM1404 384h8v8h-8z"/></g>
  <g fill="#333"><path d="M582 268l3 0 2 8-3 0zM639 245l3 0 2 8-3 0zM696 220l3 0 2 8-3 0zM225 150h8v2h-8z"/><path fill="#666" d="M1163 949h12v8h-12zM1225 941h12v8h-12zM1285 933h12v8h-12zM1348 926h12v8h-12zM780 500h12v7h-12zM842 511h12v8h-12z"/></g>
  <g class="peaks"></g>
  <g><use href="#hut" x="256" y="531"/><use href="#hut" x="1418" y="624"/><use href="#hut" x="1296" y="926"/>
    <path d="M253 543v-9h7v9z" fill="none" stroke="#0092da" stroke-width="3"/>
    <path d="M1418 617v8l-4 12M1418 625l5 12M1413 624l5-4 5 4M1296 919v8l-4 12M1296 927l5 12M1291 926l5-4 5 4" fill="none" stroke="#3a9fd8" stroke-width="3"/></g>
  <g fill="#333"><text x="842" y="245" style="font-size:22px">Vorderthal</text><text x="1046" y="528" style="font-size:22px">Innerthal</text>
    <text transform="translate(957 506) rotate(4)" style="font-size:16px">Seestrasse</text>
    <text transform="translate(739 147) rotate(43)" style="font-size:16px">Wägitalstrasse</text></g>
  <g fill="#5c8dc5" font-style="italic"><text x="1099" y="845" style="font-size:22px">Wägitalersee</text>
    <text style="font-size:18px;text-anchor:start"><textPath href="#stream">Wägitaler Aa</textPath></text></g>
  <g fill="#a58ab0"><text transform="translate(630 960) rotate(48)">March</text><text transform="translate(24 24) rotate(-75)">Eins</text></g>
  <g fill="#8c6644"><text x="194" y="5">1317 m</text></g>
  <g fill="none" stroke="#3388ff" stroke-width="7" stroke-linecap="round" stroke-linejoin="round">
    <path d="M634 418L637 429V446L647 452 645 457 634 458 622 456 616 460 623 463 612 469 602 474 612 483 621 493 633 498 631 503 659 504 697 496 716 490 738 493 741 498 745 516 746 525 757 516 780 524 790 530 802 527 806 534 819 537 836 529 842 518 848 531 867 522 871 515 899 494 895 492"/>
    <path d="M842 518L848 544 855 544 865 552 863 558 848 564 836 564 824 571 822 576 814 576 808 582 798 578 795 569 781 556 761 556 764 548 762 526 755 517"/>
  </g>
</svg>
<div class="zoom"><button type="button" aria-label="Zoom in">+</button><button type="button" aria-label="Zoom out">−</button></div>
<div class="attribution"><a href="#leaflet"><svg viewBox="0 0 24 16" aria-hidden="true"><path fill="#4c7be1" d="M0 0h24v8H0z"/><path fill="#ffd500" d="M0 8h24v6H0z"/><path fill="#e0bc00" d="M0 14h24v2H0z"/></svg>Leaflet</a></div>`, root => {
  const areas = (list, fill) => (list || []).map(p => `<polygon points="${p}" fill="${fill}"${fill[0] === '#' ? ` stroke="${fill}" stroke-width="2" stroke-linejoin="round"` : ''}/>`).join('');
  const lines = (list, color, width, dash) => (list || []).map(d => `<path d="${d}" fill="none" stroke="${color}" stroke-width="${width}" stroke-linejoin="round" stroke-linecap="${dash ? 'butt' : 'round'}"${dash ? ` stroke-dasharray="${dash}"` : ''}/>`).join('');
  const layer = draw => sheets.map(s => `<g transform="translate(${s.x} ${s.y}) scale(${s.kx} ${s.ky})">${draw(s)}</g>`).join('');
  sheets[0].main = ['M1510,0 1495,40 1460,90 1465,220 1500,300 1526,351'];
  sheets[1].main = ['M0,350 160,550 Q190,660 250,730 Q270,830 330,970 L370,1040 Q385,1130 345,1140 L320,1130 Q230,1150 230,1190 Q230,1290 310,1380 L360,1490 390,1502 610,1520 650,1560'];
  sheets[0].water = ['M1440,60 1450,200 1470,320 1510,390'];
  root.querySelector('.sheets').innerHTML =
    layer(s => areas(s.grass, '#cdebb0')) +
    layer(s => areas(s.woods, '#add19e') + areas(s.pale, '#f2efe9') + areas(s.rock, 'url(#scree)') + areas(s.town, '#e0dfdf') + areas(s.lake, '#aad3df')) +
    layer(s => lines(s.water, '#aad3df', 7) + lines(s.stream, '#8ecbe8', 3)) +
    layer(s => lines(s.path, '#b8a352', 2, '12 4') + lines(s.border, '#ab98a9', 3, '14 4 4 4')) +
    layer(s => lines(s.lane, '#c8c4bd', 6) + lines(s.white, '#c4c4bc', 9) + lines(s.motor, '#aaa', 12)) +
    layer(s => lines(s.lane, '#fff', 4) + lines(s.white, '#fff', 7) + lines(s.motor, '#fff', 9)) +
    layer(s => lines(s.main, '#c6c78a', 12)) + layer(s => lines(s.main, '#f7fabf', 9));
  root.querySelector('.trees').innerHTML = sheets.flatMap(s => s.tree.split(' ').map(p => {
    const [x, y] = p.split(',').map(Number);
    return `<use href="#tree" x="${Math.round(s.x + x * s.kx)}" y="${Math.round(s.y + y * s.ky)}"/>`;
  })).join('');
  root.querySelector('.peaks').innerHTML = peaks.map(([x, y, tx, ty, names]) =>
    `<path d="M${x} ${y - 7}l8 14h-16z" fill="#d08f55"/>` +
    (names || []).map((n, i) => `<text x="${tx}" y="${ty + i * 24}">${n}</text>`).join('')).join('');
});
</script>
</body>
</html>
